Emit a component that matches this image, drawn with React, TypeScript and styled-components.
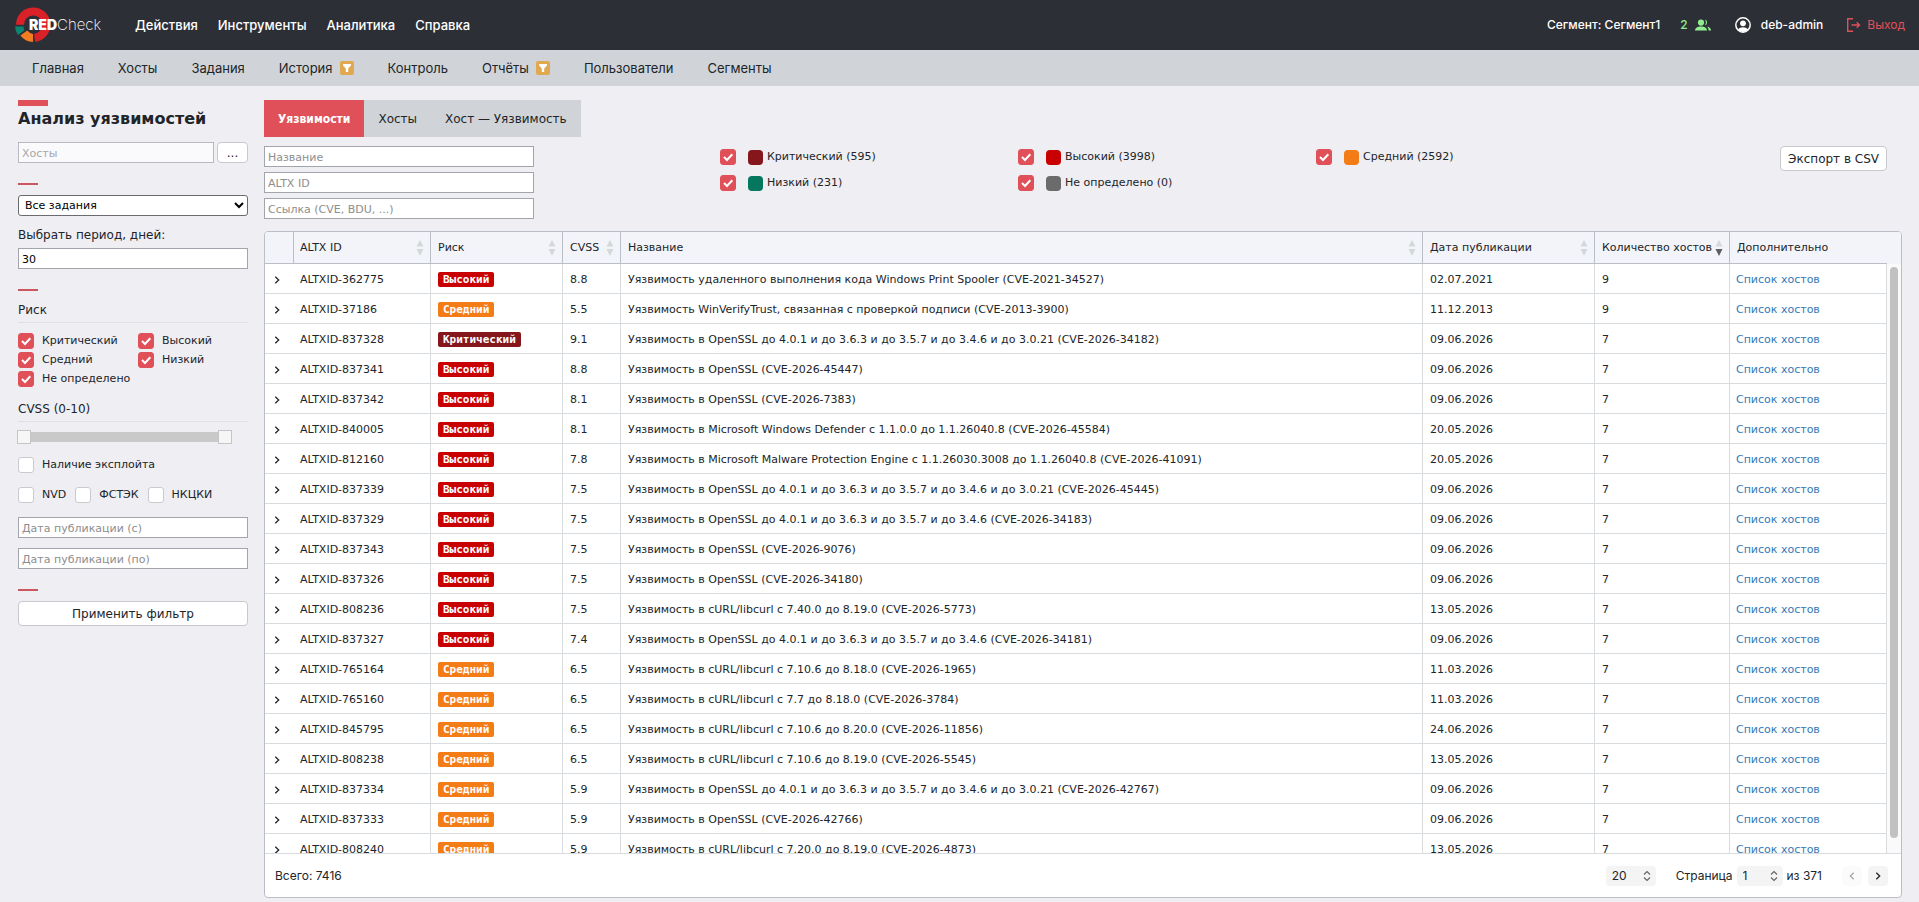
import React from "react";
import styled, { createGlobalStyle, css } from "styled-components";

const RED = "#e05058";
const SANS = `"DejaVu Sans", sans-serif`;
const UI = `Inter, sans-serif`;

const Global = createGlobalStyle`
  *, *::before, *::after { box-sizing: border-box; }
  body { margin: 0; background: #efeef3; color: #212529; font: 11px/16px ${SANS}; }
  button, input, select { font-family: inherit; font-size: inherit; color: inherit; margin: 0; }
  a { text-decoration: none; color: inherit; }
`;

const Page = styled.div`
  height: 100vh;
  display: flex;
  flex-direction: column;
`;

/* ---------- top bars ---------- */

const TopBar = styled.header`
  flex: none;
  height: 50px;
  display: flex;
  align-items: center;
  padding: 0 14px;
  background: #2d2f37;
  color: #fff;
  font: 500 13px/20px ${UI};
`;

const Brand = styled.a`
  display: flex;
  align-items: center;
  width: 121px;
`;

const BrandMark = styled.svg`
  flex: none;
  width: 38px;
  height: 36px;
`;

const BrandName = styled.span`
  margin-left: -23px;
  font-size: 14px;
  font-weight: 900;
  span {
    font-weight: 200;
    font-size: 15px;
  }
`;

const MainMenu = styled.nav`
  display: flex;
  gap: 20px;
`;

const Account = styled.div`
  margin-left: auto;
  display: flex;
  align-items: center;
  font-size: 12px;
`;

const Online = styled.span`
  display: flex;
  align-items: center;
  gap: 7px;
  margin-left: 20px;
  color: #90ee90;
`;

const Profile = styled.a`
  display: flex;
  align-items: center;
  gap: 10px;
  margin-left: 24px;
`;

const Exit = styled.a`
  display: flex;
  align-items: center;
  gap: 6px;
  margin-left: 23px;
  color: ${RED};
  font-weight: 400;
`;

const SubNav = styled.nav`
  flex: none;
  height: 36px;
  display: flex;
  align-items: center;
  gap: 34px;
  padding: 0 32px;
  background: #d0d4d8;
  font: 400 13px/20px ${UI};
`;

const SubLink = styled.a`
  display: flex;
  align-items: center;
  gap: 7px;
`;

/* ---------- shared form parts ---------- */

const field = css`
  height: 21px;
  border: 1px solid #a3a5ad;
  background: #fff;
  padding: 2px 3px 0;
`;

const TextField = styled.input`
  ${field}
  width: 100%;
  min-width: 0;
  color: #000;
  &::placeholder { color: #8e8e8e; opacity: 1; }
  &:disabled { background: #fafafd; border-color: #b8bac1; }
  &:disabled::placeholder { color: #a6a6a6; }
`;

const Button = styled.button<{ $compact?: boolean }>`
  height: ${(p) => (p.$compact ? 21 : 25)}px;
  padding: 0 7px;
  border: 1px solid #c8c9cd;
  border-radius: 4px;
  background: #fff;
  font-size: 12px;
  line-height: 16px;
  white-space: nowrap;
`;

const Tick = styled.input`
  appearance: none;
  flex: none;
  width: 16px;
  height: 16px;
  border: 1px solid #c9cacf;
  border-radius: 3px;
  background: #fff;
  &:checked {
    border-color: ${RED};
    background: ${RED};
  }
`;

const TickBox = styled.span`
  position: relative;
  flex: none;
  display: flex;
  svg {
    position: absolute;
    inset: 0;
    pointer-events: none;
  }
`;

const TickLabel = styled.label`
  display: flex;
  align-items: center;
  gap: 8px;
`;

/* ---------- sidebar ---------- */

const Body = styled.div`
  flex: 1;
  min-height: 0;
  display: flex;
  gap: 16px;
  padding: 14px 17px 4px 18px;
`;

const Sidebar = styled.aside`
  flex: none;
  width: 230px;
`;

const TitleBar = styled.div`
  width: 30px;
  height: 6px;
  background: ${RED};
`;

const Title = styled.h1`
  margin: 0 0 10px;
  font-size: 16px;
  line-height: 26px;
`;

const HostPicker = styled.div`
  display: flex;
  gap: 3px;
  button { width: 31px; flex: none; }
`;

const Dash = styled.div`
  width: 20px;
  height: 2px;
  margin: 20px 0 10px;
  background: #cb565f;
`;

const TaskSelect = styled.select`
  display: block;
  width: 100%;
  height: 21px;
  border: 1px solid #6b6b6f;
  border-radius: 3px;
  background: #fff;
  padding: 0 2px;
  color: #000;
`;

const FieldLabel = styled.label`
  display: block;
  padding: 11px 0 5px;
  font-size: 12px;
  line-height: 16px;
`;

const Section = styled.h2`
  margin: 0;
  padding: 1px 0 4px;
  border-bottom: 1px solid #e0e0e4;
  font-size: 12px;
  font-weight: 400;
  line-height: 16px;
`;

const RiskGrid = styled.div`
  display: grid;
  grid-template-columns: 120px 1fr;
  gap: 3px 0;
  margin: 10px 0 13px;
`;

const Range = styled.div`
  position: relative;
  width: 215px;
  height: 14px;
  margin: 8px 0 13px -1px;
  display: flex;
  align-items: center;
  &::before {
    content: "";
    width: 100%;
    height: 10px;
    background: #c9c9c9;
  }
`;

const RangeInput = styled.input`
  appearance: none;
  position: absolute;
  inset: 0;
  width: 100%;
  height: 14px;
  background: none;
  pointer-events: none;
  &::-webkit-slider-thumb {
    appearance: none;
    pointer-events: auto;
    width: 14px;
    height: 14px;
    border: 1px solid #c5c5c5;
    background: #f6f6f6;
  }
`;

const SourceRow = styled.div`
  display: flex;
  gap: 9px;
  margin: 14px 0;
`;

const DateFields = styled.div`
  display: grid;
  gap: 10px;
`;

const Apply = styled(Button)`
  width: 100%;
`;

/* ---------- main area ---------- */

const Main = styled.main`
  flex: 1;
  min-width: 0;
  display: flex;
  flex-direction: column;
`;

const Tabs = styled.div`
  display: flex;
  align-self: flex-start;
  background: #d0d4d8;
`;

const Tab = styled.button<{ $active?: boolean }>`
  height: 37px;
  padding: 0 14px;
  border: 0;
  background: ${(p) => (p.$active ? RED : "transparent")};
  color: ${(p) => (p.$active ? "#fff" : "#212529")};
  font-family: ${(p) => (p.$active ? `"DejaVu Sans Condensed", "DejaVu Sans", sans-serif` : "inherit")};
  font-weight: ${(p) => (p.$active ? 700 : 400)};
  font-size: 12px;
`;

const Filters = styled.div`
  display: flex;
  align-items: flex-start;
  padding: 9px 15px 12px 0;
`;

const SearchFields = styled.div`
  flex: none;
  width: 270px;
  display: grid;
  gap: 5px;
`;

const Legend = styled.div`
  flex: 0 1 894px;
  display: grid;
  grid-template-columns: repeat(3, 1fr);
  gap: 10px 0;
  margin: 3px auto 0 186px;
`;

const LegendLabel = styled.label`
  display: flex;
  align-items: center;
  line-height: 16px;
`;

const Swatch = styled.span<{ $color: string }>`
  width: 15px;
  height: 15px;
  margin: 0 4px 0 12px;
  border-radius: 4px;
  background: ${(p) => p.$color};
`;

/* ---------- table ---------- */

const Panel = styled.section`
  flex: 1;
  min-height: 0;
  display: flex;
  flex-direction: column;
  border: 1px solid #babfc7;
  border-radius: 4px;
  background: #fff;
  overflow: hidden;
`;

const TableArea = styled.div`
  flex: 1;
  min-height: 0;
  display: flex;
`;

const Scroller = styled.div`
  flex: 1;
  min-width: 0;
  overflow: auto;
  scrollbar-width: none;
`;

const Gutter = styled.div`
  flex: none;
  width: 14px;
  display: flex;
  flex-direction: column;
  background: #fafafa;
`;

const GutterCap = styled.div`
  height: 32px;
  background: #f3f4f9;
`;

const Thumb = styled.div`
  width: 8px;
  height: 571px;
  margin: 3px auto 0;
  border-radius: 4px;
  background: #c1c1c1;
`;

const Grid = styled.table`
  width: 100%;
  table-layout: fixed;
  border-collapse: separate;
  border-spacing: 0;
`;

const HeadCell = styled.th`
  position: sticky;
  top: 0;
  height: 32px;
  padding: 1px 6px 0 7px;
  border-right: 1px solid #babfc7;
  border-bottom: 1px solid #babfc7;
  background: #f3f4f9;
  font-weight: 400;
  text-align: left;
  white-space: nowrap;
  &:nth-child(2) { padding-left: 6px; }
  &:last-child { border-right: 0; }
`;

const HeadInner = styled.div`
  display: flex;
  align-items: center;
  justify-content: space-between;
`;

const Cell = styled.td`
  height: 30px;
  padding: 2px 6px 0 7px;
  border-right: 1px solid #d9dcde;
  border-bottom: 1px solid #d9dcde;
  white-space: nowrap;
  overflow: hidden;
  &:first-child { border-right: 0; padding-left: 4px; }
  &:nth-child(2), &:last-child { padding-left: 6px; }
`;

const Expand = styled.button`
  display: block;
  padding: 0;
  border: 0;
  background: none;
  svg { display: block; }
`;

const Badge = styled.span<{ $color: string }>`
  display: inline-block;
  padding: 0 5px;
  border-radius: 2px;
  background: ${(p) => p.$color};
  color: #fff;
  font: 700 11px/15px "DejaVu Sans Mono", monospace;
  vertical-align: middle;
`;

const HostLink = styled.a`
  color: #337ab7;
`;

const Footer = styled.footer`
  flex: none;
  height: 44px;
  display: flex;
  align-items: center;
  padding: 0 13px 0 10px;
  border-top: 1px solid #d9dcde;
  font: 400 12px/20px ${UI};
`;

const PageSize = styled.div`
  margin: 0 20px 0 auto;
`;

const PageJump = styled.label`
  display: flex;
  align-items: center;
  gap: 4px;
  margin-right: 14px;
`;

const Picker = styled.span<{ $width: number }>`
  position: relative;
  display: block;
  width: ${(p) => p.$width}px;
  select {
    appearance: none;
    display: block;
    width: 100%;
    height: 20px;
    padding: 0 6px;
    border: 0;
    border-radius: 4px;
    background: #f4f4f4;
  }
  svg {
    position: absolute;
    right: 5px;
    top: 4px;
    pointer-events: none;
  }
`;

const Step = styled.button`
  width: 20px;
  height: 20px;
  display: grid;
  place-items: center;
  margin-left: 6px;
  padding: 0;
  border: 0;
  border-radius: 4px;
  background: #f4f4f4;
  &:disabled { background: #fbfbfb; color: #a8a8a8; }
`;

/* ---------- drawings ---------- */

const Logo = () => (
  <BrandMark viewBox="0 0 38 36">
    <path d="M6.400 18.200 A13.200 13.200 0 1 1 21 31.200" fill="none" stroke="#da2128" strokeWidth="8" transform="translate(-.4 -.4)" />
    <path d="M1 19.500 L9.500 19.500 Q9.600 22 10.400 23.600 L4 28 Q1.200 24 1 19.500Z" fill="#0b8470" />
    <path d="M6.400 28.600 L13.200 23.600 Q15.600 26.400 19 27 L19 35 Q11 34.800 6.400 28.600Z" fill="#f47c20" />
  </BrandMark>
);

const Funnel = () => (
  <svg width="14" height="14" viewBox="0 0 14 14">
    <rect width="14" height="14" rx="2" fill="#e0a94f" />
    <path d="M3 3h8v1.400L8.200 7.400V11H5.800V7.400L3 4.400z" fill="#fff" />
  </svg>
);

const People = () => (
  <svg width="16" height="16" viewBox="0 0 16 16" fill="currentColor">
    <circle cx="6" cy="5.600" r="3.100" />
    <path d="M0 13.600c0-2.800 2.600-4.200 6-4.200s6 1.400 6 4.200z" />
    <path d="M9.800 2.600a3.100 3.100 0 0 1 0 6a5 5 0 0 0 0-6z" />
    <path d="M12 9.600c2.400.6 4 1.800 4 4h-2.400c0-1.700-.5-3-1.600-4z" />
  </svg>
);

const UserIcon = () => (
  <svg width="16" height="16" viewBox="0 0 16 16">
    <circle cx="8" cy="8" r="7.200" fill="none" stroke="currentColor" strokeWidth="1.500" />
    <circle cx="8" cy="6.300" r="2.900" fill="currentColor" />
    <path d="M2.800 12.600c2.800-3 7.600-3 10.400 0A7 7 0 0 1 2.800 12.600z" fill="currentColor" />
  </svg>
);

const ExitIcon = () => (
  <svg width="15" height="16" viewBox="0 0 15 16" fill="none" stroke="currentColor" strokeWidth="1.400">
    <path d="M7 1.700H1.700V14.300H7M5.500 8H13.500M10.700 5.200L13.500 8L10.700 10.800" />
  </svg>
);

const Check = () => (
  <svg width="16" height="16" viewBox="0 0 16 16" fill="none" stroke="#fff" strokeWidth="2">
    <path d="M4 8L7 11L12.300 5.300" />
  </svg>
);

const Sorter = ({ desc }: { desc?: boolean }) => (
  <svg width="8" height="16" viewBox="0 0 8 16">
    <path d="M4 0L7.500 6.500H.5z" fill="#d5d8db" />
    <path d="M4 16L7.500 9H.5z" fill={desc ? "#5d6063" : "#d5d8db"} />
  </svg>
);

const Chevron = ({ left }: { left?: boolean }) => (
  <svg width="16" height="16" viewBox="0 0 16 16" fill="none" stroke="currentColor" strokeWidth="1.300">
    <path d={left ? "M9.700 4.700L6.300 8L9.700 11.300" : "M6.300 4.700L9.700 8L6.300 11.300"} />
  </svg>
);

const UpDown = () => (
  <svg width="8" height="12" viewBox="0 0 8 12" fill="none" stroke="#666" strokeWidth="1.200">
    <path d="M1 4.500L4 1.500L7 4.500M1 7.500L4 10.500L7 7.500" />
  </svg>
);

/* ---------- data ---------- */

const COLORS = {
  "Критический": "#85171c",
  "Высокий": "#c80000",
  "Средний": "#f47c16",
  "Низкий": "#04775e",
  "Не определено": "#6b6b6b",
};
type Risk = keyof typeof COLORS;

const RISKS: [Risk, number][] = [
  ["Критический", 595],
  ["Высокий", 3998],
  ["Средний", 2592],
  ["Низкий", 231],
  ["Не определено", 0],
];

const H: Risk = "Высокий";
const M: Risk = "Средний";
const C: Risk = "Критический";

const ROWS: [string, Risk, string, string, string, number][] = [
  ["362775", H, "8.8", "Уязвимость удаленного выполнения кода Windows Print Spooler (CVE-2021-34527)", "02.07.2021", 9],
  ["37186", M, "5.5", "Уязвимость WinVerifyTrust, связанная с проверкой подписи (CVE-2013-3900)", "11.12.2013", 9],
  ["837328", C, "9.1", "Уязвимость в OpenSSL до 4.0.1 и до 3.6.3 и до 3.5.7 и до 3.4.6 и до 3.0.21 (CVE-2026-34182)", "09.06.2026", 7],
  ["837341", H, "8.8", "Уязвимость в OpenSSL (CVE-2026-45447)", "09.06.2026", 7],
  ["837342", H, "8.1", "Уязвимость в OpenSSL (CVE-2026-7383)", "09.06.2026", 7],
  ["840005", H, "8.1", "Уязвимость в Microsoft Windows Defender с 1.1.0.0 до 1.1.26040.8 (CVE-2026-45584)", "20.05.2026", 7],
  ["812160", H, "7.8", "Уязвимость в Microsoft Malware Protection Engine с 1.1.26030.3008 до 1.1.26040.8 (CVE-2026-41091)", "20.05.2026", 7],
  ["837339", H, "7.5", "Уязвимость в OpenSSL до 4.0.1 и до 3.6.3 и до 3.5.7 и до 3.4.6 и до 3.0.21 (CVE-2026-45445)", "09.06.2026", 7],
  ["837329", H, "7.5", "Уязвимость в OpenSSL до 4.0.1 и до 3.6.3 и до 3.5.7 и до 3.4.6 (CVE-2026-34183)", "09.06.2026", 7],
  ["837343", H, "7.5", "Уязвимость в OpenSSL (CVE-2026-9076)", "09.06.2026", 7],
  ["837326", H, "7.5", "Уязвимость в OpenSSL (CVE-2026-34180)", "09.06.2026", 7],
  ["808236", H, "7.5", "Уязвимость в cURL/libcurl с 7.40.0 до 8.19.0 (CVE-2026-5773)", "13.05.2026", 7],
  ["837327", H, "7.4", "Уязвимость в OpenSSL до 4.0.1 и до 3.6.3 и до 3.5.7 и до 3.4.6 (CVE-2026-34181)", "09.06.2026", 7],
  ["765164", M, "6.5", "Уязвимость в cURL/libcurl с 7.10.6 до 8.18.0 (CVE-2026-1965)", "11.03.2026", 7],
  ["765160", M, "6.5", "Уязвимость в cURL/libcurl с 7.7 до 8.18.0 (CVE-2026-3784)", "11.03.2026", 7],
  ["845795", M, "6.5", "Уязвимость в cURL/libcurl с 7.10.6 до 8.20.0 (CVE-2026-11856)", "24.06.2026", 7],
  ["808238", M, "6.5", "Уязвимость в cURL/libcurl с 7.10.6 до 8.19.0 (CVE-2026-5545)", "13.05.2026", 7],
  ["837334", M, "5.9", "Уязвимость в OpenSSL до 4.0.1 и до 3.6.3 и до 3.5.7 и до 3.4.6 и до 3.0.21 (CVE-2026-42767)", "09.06.2026", 7],
  ["837333", M, "5.9", "Уязвимость в OpenSSL (CVE-2026-42766)", "09.06.2026", 7],
  ["808240", M, "5.9", "Уязвимость в cURL/libcurl с 7.20.0 до 8.19.0 (CVE-2026-4873)", "13.05.2026", 7],
];

const COLUMNS: { title: string; width?: number; sort?: "both" | "desc" }[] = [
  { title: "", width: 29 },
  { title: "ALTX ID", width: 137, sort: "both" },
  { title: "Риск", width: 132, sort: "both" },
  { title: "CVSS", width: 58, sort: "both" },
  { title: "Название", sort: "both" },
  { title: "Дата публикации", width: 172, sort: "both" },
  { title: "Количество хостов", width: 135, sort: "desc" },
  { title: "Дополнительно", width: 157 },
];

const Box = ({ checked }: { checked?: boolean }) => (
  <TickBox>
    <Tick type="checkbox" defaultChecked={checked} />
    {checked && <Check />}
  </TickBox>
);

const TickOption = ({ text, checked }: { text: string; checked?: boolean }) => (
  <TickLabel>
    <Box checked={checked} />
    {text}
  </TickLabel>
);

export default function App() {
  return (
    <Page>
      <Global />
      <TopBar>
        <Brand href="#">
          <Logo />
          <BrandName>
            RED<span>Check</span>
          </BrandName>
        </Brand>
        <MainMenu>
          {["Действия", "Инструменты", "Аналитика", "Справка"].map((t) => (
            <a href="#" key={t}>{t}</a>
          ))}
        </MainMenu>
        <Account>
          <span>Сегмент: Сегмент1</span>
          <Online>2 <People /></Online>
          <Profile href="#"><UserIcon />deb-admin</Profile>
          <Exit href="#"><ExitIcon />Выход</Exit>
        </Account>
      </TopBar>

      <SubNav>
        {["Главная", "Хосты", "Задания", "История", "Контроль", "Отчёты", "Пользователи", "Сегменты"].map((t) => (
          <SubLink href="#" key={t}>
            {t}
            {(t === "История" || t === "Отчёты") && <Funnel />}
          </SubLink>
        ))}
      </SubNav>

      <Body>
        <Sidebar>
          <TitleBar />
          <Title>Анализ уязвимостей</Title>
          <HostPicker>
            <TextField placeholder="Хосты" aria-label="Хосты" disabled />
            <Button $compact>...</Button>
          </HostPicker>
          <Dash />
          <TaskSelect aria-label="Задания">
            <option>Все задания</option>
          </TaskSelect>
          <FieldLabel htmlFor="period">Выбрать период, дней:</FieldLabel>
          <HostPicker>
            <TextField id="period" defaultValue="30" />
          </HostPicker>
          <Dash />
          <Section>Риск</Section>
          <RiskGrid>
            {(["Критический", "Высокий", "Средний", "Низкий", "Не определено"] as Risk[]).map((r) => (
              <TickOption key={r} text={r} checked />
            ))}
          </RiskGrid>
          <Section>CVSS (0-10)</Section>
          <Range>
            <RangeInput type="range" min={0} max={10} defaultValue={0} aria-label="CVSS от" />
            <RangeInput type="range" min={0} max={10} defaultValue={10} aria-label="CVSS до" />
          </Range>
          <TickOption text="Наличие эксплойта" />
          <SourceRow>
            <TickOption text="NVD" />
            <TickOption text="ФСТЭК" />
            <TickOption text="НКЦКИ" />
          </SourceRow>
          <DateFields>
            <TextField placeholder="Дата публикации (с)" aria-label="Дата публикации (с)" />
            <TextField placeholder="Дата публикации (по)" aria-label="Дата публикации (по)" />
          </DateFields>
          <Dash />
          <Apply>Применить фильтр</Apply>
        </Sidebar>

        <Main>
          <Tabs>
            <Tab $active>Уязвимости</Tab>
            <Tab>Хосты</Tab>
            <Tab>Хост — Уязвимость</Tab>
          </Tabs>
          <Filters>
            <SearchFields>
              {["Название", "ALTX ID", "Ссылка (CVE, BDU, ...)"].map((t) => (
                <TextField key={t} placeholder={t} aria-label={t} />
              ))}
            </SearchFields>
            <Legend>
              {RISKS.map(([risk, count]) => (
                <LegendLabel key={risk}>
                  <Box checked />
                  <Swatch $color={COLORS[risk]} />
                  {risk} ({count})
                </LegendLabel>
              ))}
            </Legend>
            <Button>Экспорт в CSV</Button>
          </Filters>

          <Panel>
            <TableArea>
              <Scroller>
                <Grid>
                  <colgroup>
                    {COLUMNS.map((c) => (
                      <col key={c.title} width={c.width} />
                    ))}
                  </colgroup>
                  <thead>
                    <tr>
                      {COLUMNS.map((c) => (
                        <HeadCell key={c.title}>
                          <HeadInner>
                            {c.title}
                            {c.sort && <Sorter desc={c.sort === "desc"} />}
                          </HeadInner>
                        </HeadCell>
                      ))}
                    </tr>
                  </thead>
                  <tbody>
                    {ROWS.map(([id, risk, cvss, name, date, hosts]) => (
                      <tr key={id}>
                        <Cell>
                          <Expand aria-label="Развернуть"><Chevron /></Expand>
                        </Cell>
                        <Cell>ALTXID-{id}</Cell>
                        <Cell><Badge $color={COLORS[risk]}>{risk}</Badge></Cell>
                        <Cell>{cvss}</Cell>
                        <Cell>{name}</Cell>
                        <Cell>{date}</Cell>
                        <Cell>{hosts}</Cell>
                        <Cell><HostLink href="#">Список хостов</HostLink></Cell>
                      </tr>
                    ))}
                  </tbody>
                </Grid>
              </Scroller>
              <Gutter>
                <GutterCap />
                <Thumb />
              </Gutter>
            </TableArea>
            <Footer>
              <span>Всего: 7416</span>
              <PageSize>
                <Picker $width={50}>
                  <select aria-label="Строк на странице"><option>20</option></select>
                  <UpDown />
                </Picker>
              </PageSize>
              <PageJump>
                Страница
                <Picker $width={46}>
                  <select><option>1</option></select>
                  <UpDown />
                </Picker>
                из 371
              </PageJump>
              <Step disabled aria-label="Назад"><Chevron left /></Step>
              <Step aria-label="Вперёд"><Chevron /></Step>
            </Footer>
          </Panel>
        </Main>
      </Body>
    </Page>
  );
}
